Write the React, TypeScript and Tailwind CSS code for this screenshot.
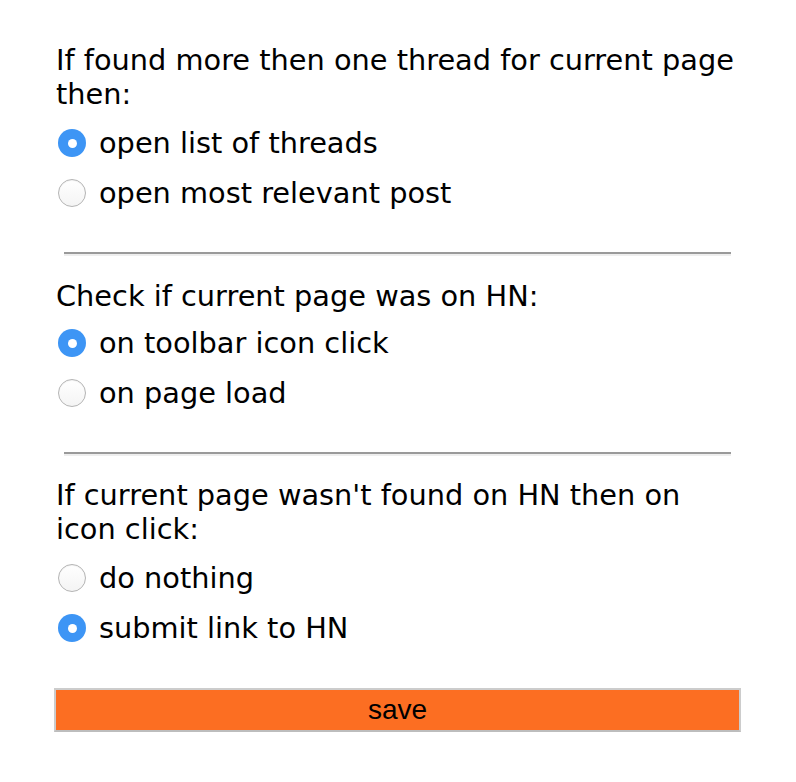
import React from "react";

function Radio({ checked }: { checked: boolean }) {
  return checked ? (
    <span className="flex h-[28px] w-[28px] shrink-0 items-center justify-center rounded-full bg-[#3d95f5]">
      <span className="h-[9px] w-[9px] rounded-full bg-white" />
    </span>
  ) : (
    <span className="h-[28px] w-[28px] shrink-0 rounded-full border-[1.5px] border-[#b4b4b4] bg-gradient-to-b from-white to-[#f4f4f4] shadow-[inset_0_1px_1px_rgba(0,0,0,0.05)]" />
  );
}

function Option({ checked, label }: { checked: boolean; label: string }) {
  return (
    <div className="flex h-[50px] items-center pl-[2px]">
      <Radio checked={checked} />
      <span className="ml-[13px] leading-[34px]">{label}</span>
    </div>
  );
}

function Divider() {
  return (
    <div className="ml-[8px] w-[667px]">
      <div className="h-[2px] bg-[#9a9a9a]" />
      <div className="h-[2px] bg-[#eeeeee]" />
    </div>
  );
}

export default function App() {
  return (
    <div
      className="min-h-[782px] w-[796px] bg-white text-[28.8px] text-black"
      style={{ fontFamily: '"DejaVu Sans", Verdana, sans-serif' }}
    >
      <div className="ml-[56px] w-[685px] pt-[43px]">
        <div className="leading-[34px]">
          If found more then one thread for current page
          <br />
          then:
        </div>
        <div className="mt-[7px]">
          <Option checked={true} label="open list of threads" />
          <Option checked={false} label="open most relevant post" />
        </div>
        <div className="mt-[34px]">
          <Divider />
        </div>
        <div className="mt-[23px] leading-[34px]">Check if current page was on HN:</div>
        <div className="mt-[5px]">
          <Option checked={true} label="on toolbar icon click" />
          <Option checked={false} label="on page load" />
        </div>
        <div className="mt-[34px]">
          <Divider />
        </div>
        <div className="mt-[22px] leading-[34px]">
          If current page wasn't found on HN then on
          <br />
          icon click:
        </div>
        <div className="mt-[7px]">
          <Option checked={false} label="do nothing" />
          <Option checked={true} label="submit link to HN" />
        </div>
      </div>
      <div className="ml-[54px] mt-[35px] w-[687px]">
        <button
          className="flex h-[44px] w-full items-center justify-center border-2 border-[#cccccc] border-b-[#bdbdbd] bg-[#fc6e22] text-[28px] text-black"
          style={{ fontFamily: '"Liberation Sans", Arial, sans-serif' }}
        >
          save
        </button>
      </div>
    </div>
  );
}
